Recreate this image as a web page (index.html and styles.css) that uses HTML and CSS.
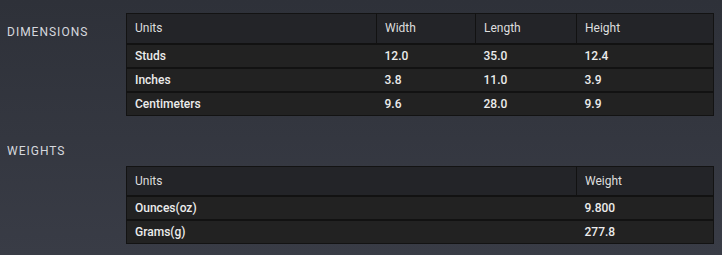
FILE: index.html
```html
<!DOCTYPE html>
<html>
<head>
<meta charset="utf-8">
<link rel="stylesheet" href="styles.css">
</head>
<body>
<div class="page">
  <section class="row dims">
    <div class="label">DIMENSIONS</div>
    <table class="spec">
      <colgroup><col class="c-units"><col class="c-w"><col class="c-l"><col class="c-h"></colgroup>
      <thead><tr><th>Units</th><th>Width</th><th>Length</th><th>Height</th></tr></thead>
      <tbody>
        <tr><td>Studs</td><td>12.0</td><td>35.0</td><td>12.4</td></tr>
        <tr><td>Inches</td><td>3.8</td><td>11.0</td><td>3.9</td></tr>
        <tr><td>Centimeters</td><td>9.6</td><td>28.0</td><td>9.9</td></tr>
      </tbody>
    </table>
  </section>
  <section class="weights">
    <div class="label wlabel">WEIGHTS</div>
    <div class="row">
      <div class="spacer"></div>
      <table class="spec">
        <colgroup><col class="c-wunits"><col class="c-h"></colgroup>
        <thead><tr><th>Units</th><th>Weight</th></tr></thead>
        <tbody>
          <tr><td>Ounces(oz)</td><td>9.800</td></tr>
          <tr><td>Grams(g)</td><td>277.8</td></tr>
        </tbody>
      </table>
    </div>
  </section>
</div>
</body>
</html>
```
FILE: styles.css
```css
html, body {
  margin: 0;
  padding: 0;
}
body {
  width: 722px;
  height: 255px;
  overflow: hidden;
  background: linear-gradient(180deg, #2e3139 0%, #393c46 100%);
  font-family: Roboto, "Liberation Sans", sans-serif;
  color: #e4e4e4;
}
.page {
  padding-top: 13px;
}
.row {
  display: flex;
  align-items: flex-start;
}
.label {
  width: 119px;
  padding-left: 7px;
  font-size: 12px;
  letter-spacing: 1px;
  color: #d6d8de;
  line-height: 14px;
}
.dims .label {
  padding-top: 12px;
}
.weights {
  padding-top: 28px;
}
.wlabel {
  width: auto;
  height: 14px;
  margin-bottom: 8px;
}
.spacer {
  width: 126px;
  flex: none;
}
.spec {
  width: 587px;
  table-layout: fixed;
  border-collapse: collapse;
  border: 1px solid #131313;
  font-size: 12px;
}
.c-units { width: 250px; }
.c-w { width: 99px; }
.c-l { width: 101px; }
.c-h { width: 137px; }
.c-wunits { width: 450px; }
.spec th {
  height: 30px;
  padding: 0 8px;
  text-align: left;
  font-weight: 400;
  color: #dedede;
  background: #232428;
  border-right: 1px solid #121212;
  border-bottom: 2px solid #121212;
  box-sizing: border-box;
}
.spec th:last-child {
  border-right: none;
}
.spec td {
  height: 22px;
  padding: 0 8px;
  font-weight: 500;
  color: #ececec;
  background: #222222;
  border-top: 2px solid #121212;
}
.spec tbody tr:first-child td {
  border-top: none;
}
```
